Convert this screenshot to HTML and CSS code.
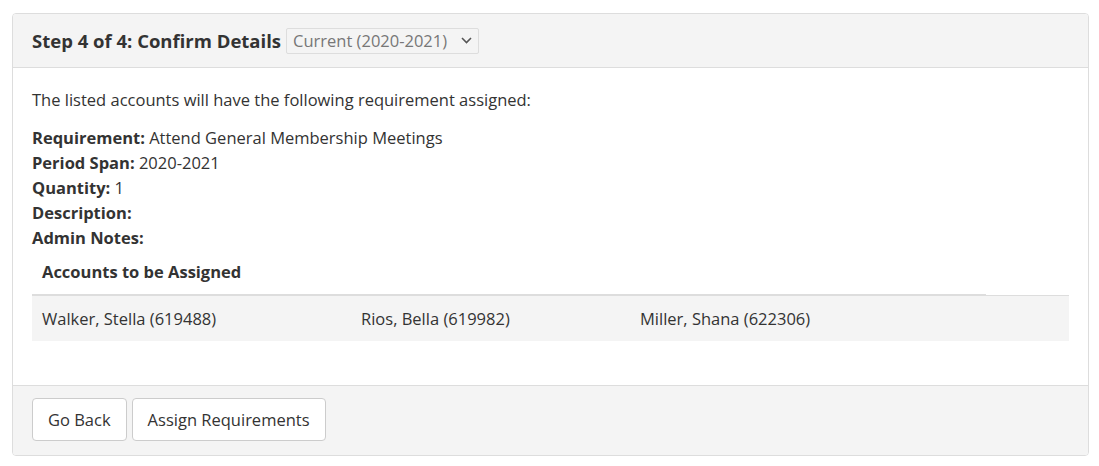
FILE: index.html
```html
<!DOCTYPE html>
<html>
<head>
<meta charset="utf-8">
<link rel="stylesheet" href="styles.css">
</head>
<body>
<div class="page">
  <div class="panel">
    <div class="panel-heading">
      <h3 class="panel-title">Step 4 of 4: Confirm Details</h3>
      <div class="select">
        <span class="select-text">Current (2020-2021)</span>
        <svg class="chev" width="11" height="7" viewBox="0 0 11 7"><path d="M1 1l4.5 4.5L10 1" fill="none" stroke="#555" stroke-width="1.6"/></svg>
      </div>
    </div>
    <div class="panel-body">
      <p class="intro">The listed accounts will have the following requirement assigned:</p>
      <div class="details">
        <div><b>Requirement:</b> Attend General Membership Meetings</div>
        <div><b>Period Span:</b> 2020-2021</div>
        <div><b>Quantity:</b> 1</div>
        <div><b>Description:</b></div>
        <div><b>Admin Notes:</b></div>
      </div>
      <table class="accounts">
        <colgroup>
          <col class="c1"><col class="c2"><col class="c3"><col class="c4">
        </colgroup>
        <thead>
          <tr><th colspan="3">Accounts to be Assigned</th><th class="blank"></th></tr>
        </thead>
        <tbody>
          <tr>
            <td>Walker, Stella (619488)</td>
            <td>Rios, Bella (619982)</td>
            <td>Miller, Shana (622306)</td>
            <td></td>
          </tr>
        </tbody>
      </table>
    </div>
    <div class="panel-footer">
      <button class="btn">Go Back</button>
      <button class="btn">Assign Requirements</button>
    </div>
  </div>
</div>
</body>
</html>
```

FILE: styles.css
```css
html, body {
  margin: 0;
  padding: 0;
  background: #fff;
}
body {
  font-family: "Open Sans", "Noto Sans", "Liberation Sans", sans-serif;
  font-size: 16.5px;
  color: #333;
}
.page {
  padding: 13px 10px 0 12px;
}
.panel {
  border: 1px solid #ddd;
  border-radius: 4px;
  background: #fff;
  overflow: hidden;
}
.panel-heading {
  display: flex;
  align-items: center;
  gap: 5px;
  height: 53px;
  padding: 0 19px;
  background: #f4f4f4;
  border-bottom: 1px solid #ddd;
}
.panel-title {
  margin: 0;
  font-size: 18.5px;
  font-weight: 700;
  color: #333;
  line-height: 26px;
}
.select {
  display: flex;
  align-items: center;
  height: 24px;
  padding: 0 6px 0 6px;
  border: 1px solid #ddd;
  border-radius: 2px;
  background: #f4f4f4;
  color: #777;
  font-size: 16.5px;
  gap: 14px;
}
.chev {
  display: block;
}
.panel-body {
  padding: 19px 19px 44px 19px;
}
.intro {
  margin: 0 0 13px;
  line-height: 25px;
}
.details {
  line-height: 25px;
}
.details b {
  font-weight: 700;
}
.accounts {
  width: 100%;
  border-collapse: collapse;
  margin-top: 0;
}
.c1 { width: 319px; }
.c2 { width: 279px; }
.c3 { width: 356px; }
.c4 { width: 83px; }
.accounts th {
  text-align: left;
  font-weight: 700;
  padding: 9px 10px 10px;
  line-height: 25px;
  border-bottom: 2px solid #ddd;
}
.accounts th.blank {
  border-bottom: none;
}
.accounts td {
  padding: 10px;
  line-height: 25px;
  border-top: 1px solid #ddd;
  background: #f4f4f4;
}
.panel-footer {
  padding: 12px 19px 14px;
  background: #f4f4f4;
  border-top: 1px solid #ddd;
  display: flex;
  gap: 5px;
}
.btn {
  font-family: inherit;
  font-size: 16.5px;
  color: #333;
  background: #fff;
  border: 1px solid #ccc;
  border-radius: 4px;
  padding: 8px 15px;
  line-height: 25px;
}
```
